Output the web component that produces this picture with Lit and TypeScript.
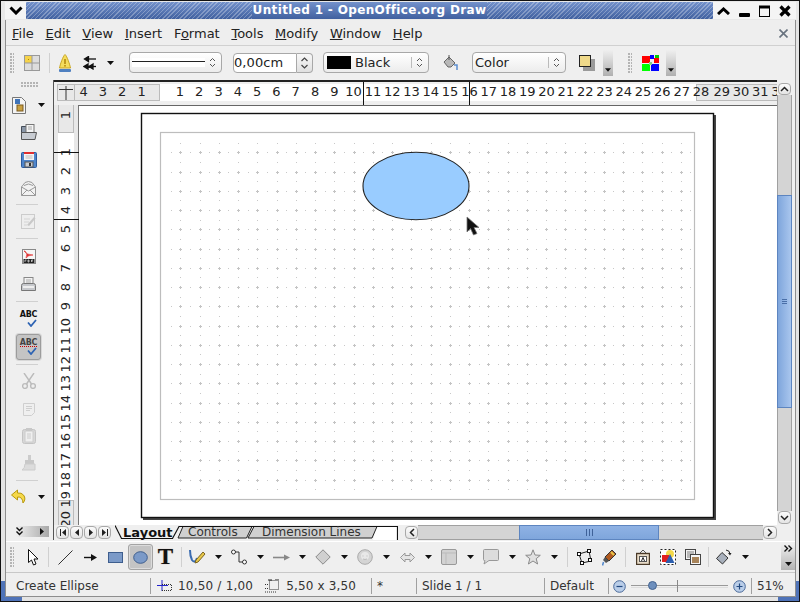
import { LitElement, html, css } from "lit";
import { customElement } from "lit/decorators.js";

const dd = html`<svg class="dd" width="7" height="4" viewBox="0 0 7 4"><path d="M0 0h7L3.500 4z" fill="#111"/></svg>`;
const chev = html`<svg width="9" height="14" viewBox="0 0 9 14" fill="none" stroke="#444" stroke-width="1.2"><path d="M1.500 5 4.500 2l3 3M1.500 9l3 3 3-3"/></svg>`;
const comboArrows = html`<span class="cb-arrows"><i></i><svg width="7" height="11" viewBox="0 0 7 11" fill="none" stroke="#555"><path d="M1 4 3.500 1.500 6 4M1 7l2.500 2.500L6 7"/></svg></span>`;
const dblRight = html`<svg width="9" height="7" viewBox="0 0 9 7" fill="none" stroke="#111" stroke-width="1.400"><path d="M.5.500l3 3-3 3M4.500.5l3 3-3 3"/></svg>`;
const dblDown = html`<svg width="7" height="9" viewBox="0 0 7 9" fill="none" stroke="#111" stroke-width="1.400"><path d="M.5.500l3 3 3-3M.5 4.500l3 3 3-3"/></svg>`;

const I = {
  table: html`<svg width="16" height="16" viewBox="0 0 16 16"><rect x=".5" y=".5" width="15" height="15" fill="#ddd" stroke="#999"/><rect x="1" y="1" width="7" height="7" fill="#f6d34a"/><path d="M8 0v16M0 8h16" stroke="#999"/><rect x="4" y="4" width="1" height="1" fill="#a80"/></svg>`,
  warn: html`<svg width="12" height="18" viewBox="0 0 12 18"><path d="M6 .5C4 2 1 11 .5 14h11C11 11 8 2 6 .5z" fill="#f4dc5c" stroke="#c9a520"/><rect x="5.200" y="5" width="1.600" height="5" fill="#b58a10"/><rect x="5.200" y="11" width="1.600" height="1.600" fill="#b58a10"/><rect x="0" y="15" width="12" height="3" rx="1" fill="#4f80c0"/></svg>`,
  arrows: html`<svg width="14" height="14" viewBox="0 0 14 14" fill="none" stroke="#111" stroke-width="1.300"><path d="M13 3H3"/><path d="M5.500 .5 1.500 3l4 2.500z" fill="#111"/><path d="M13 10.500H3"/><path d="M5 8 1 10.500 5 13z M10 8 6 10.500 10 13z" fill="#111"/></svg>`,
  fill: html`<svg width="17" height="17" viewBox="0 0 17 17"><path d="M2 8 7 3l6 6-4 4H6z" fill="#b8b8b8" stroke="#666"/><path d="M7 1v5" stroke="#555"/><path d="M12 11h3v5" fill="none" stroke="#5c8ed0" stroke-width="1.500"/></svg>`,
  shadow: html`<svg width="16" height="16" viewBox="0 0 16 16"><rect x="4" y="4" width="12" height="12" fill="#9a9a9a"/><rect x=".5" y=".5" width="11" height="11" fill="#efd98a" stroke="#222"/></svg>`,
  colors: html`<svg width="17" height="16" viewBox="0 0 17 16"><rect x="0" y="1" width="8" height="7" fill="#f00"/><rect x="8" y="0" width="4" height="4" fill="#00f"/><rect x="13" y="0" width="4" height="4" fill="#0c0"/><rect x="12" y="3" width="5" height="5" fill="#f00"/><rect x="0" y="9" width="8" height="7" fill="#0f0"/><rect x="9" y="9" width="8" height="7" fill="#00f"/><rect x="7" y="7" width="3" height="3" fill="#8c8"/></svg>`,
  newdoc: html`<svg width="14" height="17" viewBox="0 0 14 17"><path d="M.5.500h9l4 4v12H.5z" fill="#f4f4f4" stroke="#777"/><rect x="3" y="2" width="5" height="5" fill="#3f73b8"/><rect x="5" y="8" width="6" height="6" fill="#c9a040" stroke="#7a5a20"/></svg>`,
  open: html`<svg width="16" height="16" viewBox="0 0 16 16"><path d="M.5 2.500h5l1 2h6v9H.5z" fill="#8a97a8" stroke="#444c58"/><rect x="5" y=".5" width="8" height="8" fill="#f4f4f4" stroke="#777"/><path d="M7 3h4M7 5h4" stroke="#aaa"/><path d="M.5 8.500h15l-1.500 7H.5z" fill="#c8ccd2" stroke="#555"/></svg>`,
  save: html`<svg width="16" height="16" viewBox="0 0 16 16"><rect x=".5" y=".5" width="15" height="15" rx="1" fill="#4f86cc" stroke="#2c5a9c"/><rect x="3" y="0" width="10" height="2" fill="#e03030"/><rect x="3" y="2" width="10" height="6" fill="#f4f4f4"/><path d="M4.500 4h7M4.500 6h7" stroke="#bbb"/><rect x="4" y="10" width="8" height="5" fill="#c8ccd2" stroke="#555"/><rect x="8" y="11" width="2" height="3" fill="#333"/></svg>`,
  mail: html`<svg width="15" height="15" viewBox="0 0 15 15" fill="#f2f2f2" stroke="#999"><path d="M.5 6 4 1.500Q7.500-.5 11 1.500L14.500 6v8.500H.5z"/><path d="M.5 6 7.500 10l7-4M.5 14.500 6 9M14.500 14.500 9 9M3 4.500q4.500-3 9 0" fill="none"/></svg>`,
  edit: html`<svg width="15" height="15" viewBox="0 0 15 15"><rect x=".5" y=".5" width="13" height="14" fill="#eee" stroke="#ccc"/><path d="M3 5h6M3 8h5M3 11h3" stroke="#d4d4d4"/><path d="M6 11 13 3l1.500 1.500L8 12z" fill="#c8c8c8"/></svg>`,
  pdf: html`<svg width="14" height="15" viewBox="0 0 14 15"><rect x=".5" y=".5" width="13" height="14" fill="#f6f6f6" stroke="#888"/><path d="M2 2q3 4 9 4Q6 6 4 9 6 5 3 2z" fill="#e03030" stroke="#e03030" stroke-width=".6"/><path d="M1.500 10h11v4h-11z" fill="#222"/><path d="M3 11v2M3 11h1.500M6 11v2h1v-2zM9.500 11v2M9.500 11H11M9.500 12H11" stroke="#fff" stroke-width=".6" fill="none"/></svg>`,
  print: html`<svg width="15" height="15" viewBox="0 0 15 15"><rect x="3" y=".5" width="9" height="7" fill="#f2f2f2" stroke="#888"/><path d="M5 3h5M5 5h5" stroke="#aaa"/><path d="M.5 8.500q0-2 2-2h10q2 0 2 2v5h-14z" fill="#c6c8cc" stroke="#777"/><rect x="2" y="9" width="11" height="2" fill="#eee"/></svg>`,
  abc: html`<span class="abc"><b>ABC</b><svg width="10" height="8" viewBox="0 0 10 8" fill="none" stroke="#2d63b3" stroke-width="1.800"><path d="M1 3.500 4 7l5-6"/></svg></span>`,
  abc2: html`<span class="abc wavy"><b>ABC</b><svg width="10" height="8" viewBox="0 0 10 8" fill="none" stroke="#2d63b3" stroke-width="1.800"><path d="M1 3.500 4 7l5-6"/></svg></span>`,
  scissors: html`<svg width="14" height="16" viewBox="0 0 14 16" fill="none" stroke="#bbb" stroke-width="1.400"><path d="M2 0 9.500 11M12 0 4.500 11"/><circle cx="3" cy="13" r="2.400"/><circle cx="11" cy="13" r="2.400"/></svg>`,
  doc: html`<svg width="12" height="13" viewBox="0 0 12 13" fill="#efefef" stroke="#cfcfcf"><path d="M.5.500h11v9l-3 3h-8z"/><path d="M3 3.500h6M3 5.500h6M3 7.500h4"/></svg>`,
  clip: html`<svg width="14" height="16" viewBox="0 0 14 16"><rect x=".5" y="1.500" width="13" height="14" rx="2" fill="#d8d8d8" stroke="#c4c4c4"/><rect x="3" y="3" width="8" height="11" fill="#efefef" stroke="#ccc"/><rect x="4" y="0" width="6" height="3" fill="#c8c8c8"/><path d="M5 6h4M5 8h4M5 10h4" stroke="#ccc"/></svg>`,
  brush: html`<svg width="14" height="16" viewBox="0 0 14 16"><rect x="6" y="0" width="3" height="5" fill="#ccc"/><rect x="3" y="5" width="9" height="4" fill="#c8c8c8"/><path d="M3 9h10v6H0q3-2 3-6z" fill="#dcdcdc" stroke="#ccc"/></svg>`,
  undo: html`<svg width="16" height="16" viewBox="0 0 16 16"><path d="M6.500 1 .5 6l6 5V8q5-.5 5.500 6 3.500-4 .5-8-2-2.500-6-2z" fill="#f6d94a" stroke="#b89a10"/></svg>`,
  cursor: html`<svg width="11" height="17" viewBox="0 0 11 17"><path d="M.5.500v13l3-2.500 2 5 2.500-1-2-5h4z" fill="#fff" stroke="#111"/></svg>`,
  line: html`<svg width="15" height="15" viewBox="0 0 15 15"><path d="M.5 14.500 14.500.5" stroke="#333"/></svg>`,
  arrow: html`<svg width="13" height="9" viewBox="0 0 13 9"><path d="M0 4.500h8" stroke="#111" stroke-width="1.400"/><path d="M7 1l6 3.500L7 8z" fill="#111"/></svg>`,
  rect: html`<svg width="15" height="11" viewBox="0 0 15 11"><rect x=".5" y=".5" width="14" height="10" fill="#7b9ac8" stroke="#3e5e8e"/></svg>`,
  ell: html`<svg width="15" height="13" viewBox="0 0 15 13"><ellipse cx="7.500" cy="6.500" rx="6.800" ry="5.800" fill="#7b9ac8" stroke="#3e5e8e"/></svg>`,
  curve: html`<svg width="17" height="16" viewBox="0 0 17 16"><path d="M1 1q0 6 2 10 3 4 5-2" fill="none" stroke="#3a6bb0" stroke-width="2"/><path d="M7 11 14 3l2 2-7 8-3 1z" fill="#e8c84a" stroke="#7a6420"/></svg>`,
  conn: html`<svg width="16" height="16" viewBox="0 0 16 16" fill="#fff" stroke="#333"><path d="M4 3h4v10h4" fill="none"/><circle cx="2.500" cy="3" r="2"/><circle cx="13.500" cy="13" r="2"/></svg>`,
  garrow: html`<svg width="17" height="7" viewBox="0 0 17 7"><path d="M0 3.500h12" stroke="#888" stroke-width="1.600"/><path d="M11 .5l6 3-6 3z" fill="#888"/></svg>`,
  diamond: html`<svg width="16" height="16" viewBox="0 0 16 16"><path d="M8 .8 15.200 8 8 15.200.8 8z" fill="#d0d0d0" stroke="#8a8a8a"/></svg>`,
  circ: html`<svg width="16" height="16" viewBox="0 0 16 16"><circle cx="8" cy="8" r="7.300" fill="#d4d4d4" stroke="#aaa"/><circle cx="8" cy="7" r="4" fill="#e8e8e8"/><path d="M5.500 7h1M9.500 7h1M6 10q2 1 4 0" stroke="#bbb" fill="none"/></svg>`,
  dbl: html`<svg width="15" height="11" viewBox="0 0 15 11"><path d="M.5 5.500 5 1v2.500h5V1l4.500 4.500L10 10V7.500H5V10z" fill="#e4e4e4" stroke="#999"/></svg>`,
  sq: html`<svg width="16" height="16" viewBox="0 0 16 16"><rect x=".5" y=".5" width="15" height="15" rx="1.500" fill="#d2d2d2" stroke="#999"/><path d="M1 4h14M5 4v11" stroke="#bbb"/></svg>`,
  callout: html`<svg width="16" height="16" viewBox="0 0 16 16"><path d="M1.500.5h13a1 1 0 0 1 1 1v9a1 1 0 0 1-1 1H6L1 15l1-3.500h-.5a1 1 0 0 1-1-1v-9a1 1 0 0 1 1-1z" fill="#dcdcdc" stroke="#999"/></svg>`,
  star: html`<svg width="16" height="16" viewBox="0 0 16 16"><path d="M8 .8 10 6l5.300.3-4.100 3.400 1.400 5.300L8 12l-4.600 3 1.400-5.300L.7 6.300 6 6z" fill="#e0e0e0" stroke="#8a8a8a"/></svg>`,
  points: html`<svg width="15" height="16" viewBox="0 0 15 16"><path d="M2 5 12 2l2 10-9 2z" fill="none" stroke="#222"/><g fill="#fff" stroke="#111"><rect x=".5" y="3.500" width="3" height="3"/><rect x="10.500" y=".5" width="3" height="3"/><rect x="11.500" y="9.500" width="3" height="3"/><rect x="3.500" y="12.500" width="3" height="3"/></g></svg>`,
  glue: html`<svg width="15" height="17" viewBox="0 0 15 17"><path d="M10 1l4 4-7 7-4-4z" fill="#b05a20" stroke="#333"/><path d="M9 3l3 3" stroke="#e8c84a" stroke-width="2"/><path d="M3 8l4 4-3 2-3-3z" fill="#555"/><path d="M1.500 13 .5 16.500" stroke="#4f86cc" stroke-width="1.500"/></svg>`,
  frame: html`<svg width="14" height="16" viewBox="0 0 14 16"><path d="M4 4 7 1l3 3" fill="none" stroke="#555"/><rect x=".5" y="4.500" width="13" height="11" fill="#e8dcc8" stroke="#4a3a28" stroke-width="1.400"/><rect x="3.500" y="7.500" width="7" height="5" fill="#fff" stroke="#555"/><path d="M5.500 12 7 8.500 8.500 12" fill="none" stroke="#222"/></svg>`,
  align: html`<svg width="16" height="16" viewBox="0 0 16 16"><rect x=".5" y=".5" width="15" height="15" fill="#fff" stroke="#222" stroke-dasharray="2 2"/><circle cx="10" cy="5" r="4" fill="#f4d94a"/><rect x="2" y="6" width="7" height="7" fill="#e02020"/><path d="M10 5l4.500 9h-9z" fill="#2d5fae"/></svg>`,
  arrange: html`<svg width="16" height="16" viewBox="0 0 16 16"><rect x=".5" y=".5" width="10" height="10" fill="#f2f2f2" stroke="#444"/><rect x="2" y="2" width="7" height="7" fill="#b8b8b8"/><rect x="5.500" y="5.500" width="10" height="10" fill="#f6f6f6" stroke="#444"/><rect x="7" y="8" width="7" height="6" fill="#a8845a"/></svg>`,
  rotate: html`<svg width="16" height="16" viewBox="0 0 16 16"><path d="M6 3.500 12 9l-5.500 6L.5 9.500z" fill="#a8b0bc" stroke="#333"/><path d="M10 1q4 .5 4 4" fill="none" stroke="#222"/><path d="M12 4l2 2.500L15.500 4z" fill="#222"/></svg>`,
  pos: html`<svg width="15" height="13" viewBox="0 0 15 13"><path d="M5 0v11M0 5.500h11" stroke="#22c" /><path d="M5 4.500h9.500v6H5" fill="none" stroke="#333" stroke-dasharray="1 1"/></svg>`,
  size: html`<svg width="14" height="14" viewBox="0 0 14 14"><rect x="4.500" y="1.500" width="9" height="9" fill="none" stroke="#333" stroke-dasharray="1 1"/><path d="M0 5.500h3M0 9.500h3M0 13h12" stroke="#333" stroke-dasharray="1 1"/><path d="M3 1h4M10 0h4" stroke="#222"/></svg>`,
  minus: html`<svg width="13" height="13" viewBox="0 0 13 13"><circle cx="6.500" cy="6.500" r="5.800" fill="#b9cde8" stroke="#4a6a9a"/><path d="M3.500 6.500h6" stroke="#234a80" stroke-width="1.200"/></svg>`,
  plus: html`<svg width="13" height="13" viewBox="0 0 13 13"><circle cx="6.500" cy="6.500" r="5.800" fill="#b9cde8" stroke="#4a6a9a"/><path d="M3.500 6.500h6M6.500 3.500v6" stroke="#234a80" stroke-width="1.200"/></svg>`,
};

function gridPath(): { cross: string; dots: string } {
  const P = 19.25;
  let cross = "";
  let dots = "";
  const X = (i: number) => Math.round(161 + P * i) + 0.5;
  const Y = (j: number) => Math.round(133 + P * j) + 0.5;
  for (let j = 0.5; j <= 18.5; j += 0.5) {
    for (let i = 0.5; i <= 27.5; i += 0.5) {
      const rowInt = Number.isInteger(j);
      const colInt = Number.isInteger(i);
      if (rowInt && colInt) cross += `M${X(i) - 2} ${Y(j)}h3M${X(i) - 0.5} ${Y(j) - 1.5}v3`;
      else if (rowInt !== colInt) dots += `M${X(i) - 0.5} ${Y(j)}h1`;
    }
  }
  return { cross, dots };
}
const grid = gridPath();

const tool = (icon: unknown) => html`<span class="tool"><span class="ti">${icon}</span>${dd}</span>`;
const slot = (icon: unknown, cls = "") => html`<span class="slot ${cls}">${icon}</span>`;
const sideRow = (icon: unknown, cls = "", drop = false) =>
  html`<div class="srow ${cls}">${slot(icon)}${drop ? dd : ""}</div>`;
const menu: [string, string, string][] = [
  ["", "F", "ile"], ["", "E", "dit"], ["", "V", "iew"], ["", "I", "nsert"],
  ["F", "o", "rmat"], ["", "T", "ools"], ["", "M", "odify"], ["", "W", "indow"], ["", "H", "elp"],
];
const range = (a: number, b: number) => Array.from({ length: b - a + 1 }, (_, i) => a + i);

@customElement("app-root")
export class AppRoot extends LitElement {
  static styles = css`
    :host { display: block; width: 800px; height: 602px; overflow: hidden; font: 13px "DejaVu Sans", sans-serif; color: #222; }
    svg { display: block; flex: none; }
    .win { position: relative; box-sizing: border-box; width: 800px; height: 602px; background: #e4e4e4; border: 1px solid #111; padding: 0 3px 4px 4px; display: flex; flex-direction: column; }
    .corner { position: absolute; bottom: 0; width: 21px; height: 20px; background: #4f73b8; }
    .corner.l { left: 0; } .corner.r { right: 0; }
    .title { height: 18px; margin: 0 -3px 0 -4px; padding: 1px 3px 0 4px; display: flex; background: #e8e8e8; flex: none; }
    .tb { display: flex; align-items: center; justify-content: center; background: #f4f4f4; height: 17px; flex: none; }
    .tb.left { width: 21px; }
    .tb.right { width: 83px; }
    .tb.right span { width: 20.500px; display: flex; justify-content: center; }
    .tbar { flex: 1; display: flex; justify-content: center; height: 17px; color: #fff; font-weight: bold; font-size: 12px; letter-spacing: .35px; line-height: 17px; background: linear-gradient(#7391cb, #40609f); }
    .hatch { flex: 1; background: repeating-linear-gradient(135deg, rgba(255,255,255,.28) 0 1px, transparent 1px 3px); }
    .tbar .t { padding: 0 1px; white-space: nowrap; }
    .body { position: relative; z-index: 1; flex: 1; display: flex; flex-direction: column; background: #efefef; border: 1px solid #8e8e8e; border-width: 0 1px 1px 1px; min-height: 0; }
    .menu { height: 26px; display: flex; align-items: center; gap: 11.700px; padding-left: 6px; padding-right: 7px; border-bottom: 1px solid #d0d0d0; box-sizing: border-box; flex: none; background: #eee; padding-top: 2px; }
    .menu .x { margin-left: auto; }
    .tbtop { height: 34px; display: flex; align-items: center; flex: none; box-sizing: border-box; padding-bottom: 1px; }
    .grip { width: 4px; height: 20px; flex: none; margin-left: 4px; background: radial-gradient(circle at 1px 1px, #b4b4b4 .8px, transparent 1px) 0 0 / 3px 3px; }
    .vsep { width: 1px; height: 20px; background: #d0d0d0; flex: none; margin: 0 4px 0 3px; }
    .dd { flex: none; }
    .combo { height: 21px; box-sizing: border-box; border: 1px solid #a8a8a8; border-radius: 4px; background: linear-gradient(#fff, #ececec); display: flex; align-items: center; flex: none; position: relative; }
    .cb-arrows { margin-left: auto; display: flex; align-items: center; gap: 4px; padding-right: 5px; }
    .cb-arrows i { width: 1px; height: 11px; background: #bbb; display: block; }
    .c-table { margin-left: 10px; }
    .c-sep1 { margin: 0 9px 0 9px; width: 1px; height: 20px; background: #d0d0d0; flex: none; }
    .c-arrows { margin-left: 12px; }
    .c-dd1 { margin-left: 10px; }
    .c-line { margin-left: 15px; width: 93px; padding-left: 2px; }
    .c-line i { display: block; width: 65px; height: 9px; background: linear-gradient(#fff 0 3px, #222 3px 4px, #fff 4px); }
    .c-input { margin-left: 11px; display: flex; height: 20px; flex: none; }
    .c-input .in { width: 64px; box-sizing: border-box; border: 1px solid #a8a8a8; border-radius: 4px 0 0 4px; background: #fff; line-height: 18px; padding-left: 0; letter-spacing: .1px; }
    .c-input .sp { width: 16px; box-sizing: border-box; border: 1px solid #a8a8a8; border-left: 0; border-radius: 0 4px 4px 0; background: linear-gradient(#f8f8f8, #e0e0e0); display: flex; align-items: center; justify-content: center; }
    .c-color { margin-left: 10px; width: 106px; padding-left: 3px; gap: 4px; }
    .swatch { width: 24px; height: 13px; background: #000; flex: none; }
    .c-fill { margin-left: 13px; }
    .c-area { margin-left: 13px; width: 94px; padding-left: 2px; }
    .c-shadow { margin-left: 13px; }
    .ddbox { width: 10px; height: 26px; flex: none; background: linear-gradient(#efefef, #b0b0b0); display: flex; align-items: flex-end; justify-content: center; padding-bottom: 4px; box-sizing: border-box; }
    .ddbox svg { width: 6px; height: 4px; }
    .c-b1 { margin-left: 8px; }
    .c-g2 { margin-left: 15px; }
    .c-colors { margin-left: 10px; }
    .c-b2 { margin-left: 7px; }
    .work { flex: 1; display: flex; min-height: 0; }
    .side { width: 47px; box-sizing: border-box; flex: none; display: flex; flex-direction: column; }
    .shgrip { height: 12px; flex: none; display: flex; justify-content: center; padding-top: 2px; box-sizing: border-box; }
    .shgrip i { width: 17px; height: 5px; display: block; background: radial-gradient(circle at 1px 1px, #b4b4b4 .8px, transparent 1px) 0 0 / 3px 3px; }
    .srow { height: 28px; flex: none; display: flex; align-items: center; padding-left: 10px; box-sizing: border-box; }
    .srow.h26 { height: 26px; }
    .srow .slot { width: 25px; flex: none; }
    .srow.left { padding-left: 5px; }
    .srow.left .slot { width: 16px; }
    .srow.left .dd { margin-left: 11px; }
    .srow.pressed .slot { background: #c4c4c4; border: 1px solid #9c9c9c; border-radius: 3px; box-shadow: 0 0 0 1px #d8d8d8; height: 26px; box-sizing: border-box; }
    .hsep { flex: none; display: flex; align-items: center; justify-content: center; padding-right: 6px; }
    .hsep i { display: block; width: 22px; height: 1px; background: #d0d0d0; }
    .h5 { height: 5px; } .h6 { height: 6px; } .h7 { height: 7px; }
    .sfoot { margin-top: auto; height: 11px; margin-bottom: 3px; display: flex; align-items: center; margin-left: 10px; width: 33px; background: linear-gradient(90deg, #efefef, #a8a8a8); flex: none; justify-content: space-between; padding: 0 5px 0 0; box-sizing: border-box; }
    .main { flex: 1; min-width: 0; display: flex; flex-direction: column; border-left: 1px solid #555; }
    .top { flex: 1; min-height: 0; display: flex; }
    .edit { width: 723px; display: flex; flex-direction: column; flex: none; border-top: 2px solid #222; box-sizing: border-box; }
    .hrow { height: 23px; flex: none; display: flex; padding: 2px 0 0 3px; box-sizing: border-box; position: relative; }
    .rcorner { width: 18px; height: 17px; flex: none; background: #e8e8e8; border: 1px solid #bbb; box-sizing: border-box; display: flex; align-items: center; justify-content: center; }
    .hruler { flex: 1; min-width: 0; display: flex; height: 17px; overflow: hidden; background: #fff; line-height: 15px; font-size: 13px; }
    .seg { display: flex; flex: none; box-sizing: border-box; height: 17px; }
    .seg.gray { background: #e8e8e8; border: 1px solid #bbb; border-width: 1px 1px 1px 0; line-height: 14px; }
    .seg.g1 { width: 85px; }
    .seg.g1 .cell:first-child { margin-left: -1px; }
    .seg.white { width: 536px; padding-left: 10.300px; position: relative; z-index: 1; }
    .seg.g2 { width: 90px; padding-left: 15px; border-width: 1px 0 1px 1px; }
    .cell { width: 19.300px; flex: none; text-align: center; white-space: nowrap; display: flex; justify-content: center; }
    .tick { position: absolute; background: #111; }
    .tick.h { top: 0; bottom: 0; width: 1px; z-index: 2; }
    .tick.h.a { left: 309px; } .tick.h.b { left: 415px; }
    .tick.v { left: 0; width: 25px; height: 1px; z-index: 2; }
    .tick.v.a { top: 47px; } .tick.v.b { top: 114px; }
    .lower { flex: 1; min-height: 0; display: flex; }
    .vwrap { width: 24px; flex: none; display: flex; position: relative; padding-left: 4px; box-sizing: border-box; background: #e8e8e8; }
    .vruler { width: 16px; display: flex; flex-direction: column; background: #fff; height: 100%; font-size: 13px; overflow: hidden; }
    .vseg { flex: none; box-sizing: border-box; width: 16px; display: flex; flex-direction: column; }
    .vseg.gray { background: #e8e8e8; border: 1px solid #bbb; }
    .vseg.v1 { height: 28px; border-top: 0; }
    .vseg.v2 { height: 367px; position: relative; z-index: 1; padding-top: 9.500px; }
    .vseg.v3 { flex: 1; border-bottom: 0; padding-top: 9px; }
    .vcell { height: 19.300px; flex: none; display: flex; align-items: center; justify-content: center; }
    .vcell span { writing-mode: vertical-rl; transform: rotate(180deg); line-height: 14px; white-space: nowrap; }
    .canvas { flex: 1; min-width: 0; background: #fff; border-left: 1px solid #777; border-top: 1px solid #666; overflow: hidden; }
    .vscroll { width: 15px; flex: none; display: flex; flex-direction: column; padding: 3px 0 1px; box-sizing: border-box; }
    .sb { box-sizing: border-box; background: linear-gradient(#fbfbfb, #e4e4e4); border: 1px solid #a8a8a8; border-radius: 4px; display: flex; align-items: center; justify-content: center; flex: none; }
    .vscroll .sb { width: 13px; height: 13px; margin-left: 1px; }
    .vscroll .sb.up { height: 12px; }
    .vtrack { flex: 1; background: #d4d4d4; border: 1px solid #a0a0a0; border-width: 0 1px; display: flex; flex-direction: column; box-sizing: border-box; }
    .vtrack .pre { height: 100px; flex: none; }
    .thumb { background: linear-gradient(90deg, #7fa6dc, #a9c6ee); border: 1px solid #5d85c0; box-sizing: border-box; display: flex; align-items: center; justify-content: center; flex: none; }
    .vtrack .thumb { height: 213px; margin: 0 -1px; }
    .vtrack .thumb i { width: 5px; height: 5px; display: block; background: repeating-linear-gradient(#4a6fa8 0 1px, transparent 1px 2px); }
    .bottom { height: 15px; flex: none; display: flex; box-sizing: border-box; }
    .nav { display: flex; gap: 1px; padding: 1px 0 0 2px; flex: none; width: 61px; box-sizing: border-box; }
    .nav .sb { width: 13px; height: 13px; }
    .tabs { width: 283px; height: 15px; flex: none; position: relative; display: flex; font-size: 12px; line-height: 13px; padding-top: 1px; box-sizing: border-box; }
    .tabs svg { position: absolute; left: 0; top: 0; }
    .tab { position: relative; white-space: nowrap; color: #333; }
    .tab.t1 { margin-left: 8px; width: 65px; color: #111; font-weight: bold; font-size: 13px; }
    .tab.t2 { width: 74px; }
    .hb { margin-left: 7px; }
    .hscroll { flex: 1; display: flex; height: 15px; }
    .hscroll .sb { width: 14px; height: 13px; margin-top: 1px; }
    .hscroll .sb.lf { width: 13px; }
    .htrack { width: 345px; flex: none; background: #d4d4d4; border-top: 1px solid #a0a0a0; border-bottom: 1px solid #a0a0a0; box-sizing: border-box; display: flex; }
    .htrack .pre { width: 101px; flex: none; }
    .htrack .thumb { width: 140px; margin: -1px 0; background: linear-gradient(#8fb2e4, #7fa6dc); }
    .htrack .thumb i { width: 7px; height: 7px; display: block; background: repeating-linear-gradient(90deg, #3f6299 0 1px, transparent 1px 3px); }
    .draw { height: 32px; flex: none; display: flex; align-items: center; border-top: 1px solid #fff; border-bottom: 1px solid #c8c8c8; box-sizing: border-box; margin-top: 1px; }
    .slot { width: 25px; display: flex; justify-content: center; align-items: center; flex: none; }
    .s24 { width: 24px; margin-left: 7px; }
    .pressed-b { height: 26px; box-sizing: border-box; background: #c4c4c4; border: 1px solid #a4a4a4; border-radius: 3px; box-shadow: 0 0 0 1px #dcdcdc inset; }
    .tool { width: 42px; flex: none; display: flex; align-items: center; }
    .ti { width: 16px; margin-left: 3px; display: flex; justify-content: center; flex: none; }
    .tool .dd { margin-left: 10px; }
    .t-text { font-family: "Liberation Serif", serif; font-weight: bold; font-size: 23px; color: #111; line-height: 24px; text-shadow: 0 0 1px #a87; }
    .over { margin-left: auto; width: 14px; height: 26px; background: linear-gradient(#efefef, #b4b4b4); display: flex; flex-direction: column; align-items: center; justify-content: space-between; padding: 1px 0 4px; box-sizing: border-box; flex: none; }
    .status { flex: none; height: 23px; display: flex; align-items: center; font-size: 12px; padding-top: 3px; box-sizing: border-box; color: #333; }
    .st { height: 16px; display: flex; align-items: center; box-sizing: border-box; flex: none; border-left: 1px solid #a0a0a0; padding-left: 5px; white-space: nowrap; }
    .st.s1 { width: 144px; border-left: 0; padding-left: 10px; }
    .st.s2 { width: 221px; padding-left: 6px; }
    .st.s3 { width: 45px; }
    .st.s4 { width: 128px; }
    .st.s5 { width: 64px; }
    .st.s6 { width: 143px; padding-left: 4px; }
    .pos-t { margin-left: 6px; letter-spacing: .2px; }
    .sz { margin-left: 12px; }
    .sz-t { margin-left: 7px; letter-spacing: .15px; }
    .slider { width: 97px; height: 13px; margin: 0 5px; position: relative; flex: none; display: flex; align-items: center; }
    .slider .rail { height: 3px; flex: 1; border: 1px solid #999; border-width: 1px 0; border-bottom-color: #ddd; box-sizing: border-box; }
    .knob { position: absolute; left: 17px; top: 1px; width: 7px; height: 7px; border-radius: 50%; background: #6d8fbd; border: 1px solid #44638f; }
    .mid { position: absolute; left: 46px; top: 0; width: 1px; height: 12px; background: #888; }
    .abc { display: flex; flex-direction: column; align-items: center; width: 16px; height: 17px; font-size: 8px; line-height: 8px; letter-spacing: -.2px; }
    .abc b { color: #111; }
    .abc svg { margin-left: 7px; }
    .abc.wavy b { color: #444; border-bottom: 1px dotted #c00; line-height: 7px; }
  `;

  render() {
    return html`
      <div class="win">
        <div class="corner l"></div><div class="corner r"></div>
        <div class="title">
          <div class="tb left"><svg width="14" height="9" viewBox="0 0 14 9" fill="none" stroke="#000" stroke-width="3"><path d="M1.500 1.500 7 7l5.500-5.500"/></svg></div>
          <div class="tbar"><div class="hatch"></div><div class="t">Untitled 1 - OpenOffice.org Draw</div><div class="hatch"></div></div>
          <div class="tb right">
            <span><svg width="13" height="8" viewBox="0 0 13 8" fill="none" stroke="#000" stroke-width="3"><path d="M1 7 6.500 2 12 7"/></svg></span>
            <span><svg width="11" height="12" viewBox="0 0 11 12"><rect y="8" width="11" height="4" rx="1" fill="#000"/></svg></span>
            <span><svg width="11" height="12" viewBox="0 0 11 12" fill="none" stroke="#000"><rect x=".5" y="1.500" width="10" height="10"/><path d="M0 2h11" stroke-width="3"/></svg></span>
            <span><svg width="12" height="12" viewBox="0 0 12 12" stroke="#000" stroke-width="3.200"><path d="M1.500 1.500l9 9M10.500 1.500l-9 9"/></svg></span>
          </div>
        </div>
        <div class="body">
          <div class="menu">
            ${menu.map(([a, u, b]) => html`<span>${a}<u>${u}</u>${b}</span>`)}
            <svg class="x" width="9" height="9" viewBox="0 0 9 9" stroke="#68737f" stroke-width="1.600"><path d="M.5.500l8 8M8.500.5l-8 8"/></svg>
          </div>
          <div class="tbtop">
            <span class="grip"></span>
            <span class="c-table">${I.table}</span>
            <span class="c-sep1"></span>
            ${I.warn}
            <span class="c-arrows">${I.arrows}</span>
            <span class="c-dd1">${dd}</span>
            <div class="combo c-line"><i></i>${comboArrows}</div>
            <div class="c-input"><div class="in">0,00cm</div><div class="sp">${chev}</div></div>
            <div class="combo c-color"><span class="swatch"></span><span>Black</span>${comboArrows}</div>
            <span class="c-fill">${I.fill}</span>
            <div class="combo c-area"><span>Color</span>${comboArrows}</div>
            <span class="c-shadow">${I.shadow}</span>
            <span class="ddbox c-b1">${dd}</span>
            <span class="grip c-g2"></span>
            <span class="c-colors">${I.colors}</span>
            <span class="ddbox c-b2">${dd}</span>
          </div>
          <div class="work">
            <div class="side">
              <div class="shgrip"><i></i></div>
              ${sideRow(I.newdoc, "h26 left", true)}
              ${sideRow(I.open)}
              ${sideRow(I.save)}
              ${sideRow(I.mail)}
              <div class="hsep h5"><i></i></div>
              ${sideRow(I.edit)}
              <div class="hsep h7"><i></i></div>
              ${sideRow(I.pdf)}
              ${sideRow(I.print)}
              <div class="hsep h7"><i></i></div>
              ${sideRow(I.abc)}
              ${sideRow(I.abc2, "pressed")}
              <div class="hsep h6"><i></i></div>
              ${sideRow(I.scissors)}
              ${sideRow(I.doc)}
              ${sideRow(I.clip, "h26")}
              ${sideRow(I.brush)}
              <div class="hsep h6"><i></i></div>
              ${sideRow(I.undo, "left", true)}
              <div class="sfoot">${dblDown}<svg width="4" height="7" viewBox="0 0 4 7"><path d="M0 0l4 3.500L0 7z" fill="#111"/></svg></div>
            </div>
            <div class="main">
              <div class="top">
                <div class="edit">
                  <div class="hrow">
                    <div class="rcorner"><svg width="14" height="14" viewBox="0 0 14 14" stroke="#333"><path d="M7 0v14M0 3.500h14"/></svg></div>
                    <div class="hruler">
                      <div class="seg gray g1">${[4, 3, 2, 1].map((n) => html`<span class="cell">${n}</span>`)}</div>
                      <div class="seg white">${range(1, 28).map((n) => html`<span class="cell">${n}</span>`)}</div>
                      <div class="seg gray g2">${range(29, 32).map((n) => html`<span class="cell">${n}</span>`)}</div>
                    </div>
                    <i class="tick h a"></i><i class="tick h b"></i>
                  </div>
                  <div class="lower">
                    <div class="vwrap">
                      <div class="vruler">
                        <div class="vseg gray v1"><span class="vcell"><span>1</span></span></div>
                        <div class="vseg v2">${range(1, 18).map((n) => html`<span class="vcell"><span>${n}</span></span>`)}<span class="vcell"><span>19</span></span></div>
                        <div class="vseg gray v3"><span class="vcell"><span>20</span></span></div>
                      </div>
                      <i class="tick v a"></i><i class="tick v b"></i>
                    </div>
                    <div class="canvas">
                      <svg width="697" height="420" viewBox="79 106 697 420">
                        <rect x="714" y="115" width="2" height="405" fill="#444"/>
                        <rect x="143" y="518" width="573" height="2" fill="#444"/>
                        <rect x="141.500" y="113.500" width="572" height="404" fill="#fff" stroke="#111" stroke-width="1.400"/>
                        <rect x="160.500" y="132.500" width="534" height="367" fill="none" stroke="#bdbdbd" stroke-width="1.200"/>
                        <path d="${grid.dots}" stroke="#c8c8c8" shape-rendering="crispEdges"/>
                        <path d="${grid.cross}" stroke="#c4c4c4" shape-rendering="crispEdges"/>
                        <ellipse cx="416" cy="186" rx="53" ry="33.800" fill="#99ccff" stroke="#222" stroke-width="1.100"/>
                        <path d="M467 217v15l3.500-3.500 3 6.500 3.500-1.500-3-6h5z" fill="#111" stroke="#777" stroke-width=".8"/>
                      </svg>
                    </div>
                  </div>
                </div>
                <div class="vscroll">
                  <div class="sb up"><svg width="9" height="6" viewBox="0 0 9 6" fill="none" stroke="#222" stroke-width="1.500"><path d="M1 5l3.500-3.500L8 5"/></svg></div>
                  <div class="vtrack"><div class="pre"></div><div class="thumb"><i></i></div></div>
                  <div class="sb"><svg width="9" height="6" viewBox="0 0 9 6" fill="none" stroke="#222" stroke-width="1.500"><path d="M1 1l3.500 3.500L8 1"/></svg></div>
                </div>
              </div>
              <div class="bottom">
                <div class="nav">
                  <div class="sb"><svg width="6" height="7" viewBox="0 0 6 7" fill="#222"><path d="M0 0h1v7H0zM6 0v7L2 3.500z"/></svg></div>
                  <div class="sb"><svg width="4" height="7" viewBox="0 0 4 7" fill="#222"><path d="M4 0v7L0 3.500z"/></svg></div>
                  <div class="sb"><svg width="4" height="7" viewBox="0 0 4 7" fill="#222"><path d="M0 0v7l4-3.500z"/></svg></div>
                  <div class="sb"><svg width="6" height="7" viewBox="0 0 6 7" fill="#222"><path d="M5 0h1v7H5zM0 0v7l4-3.500z"/></svg></div>
                </div>
                <div class="tabs">
                  <svg width="283" height="15" viewBox="115 525 283 15">
                    <path d="M377 526h20v14h-24z" fill="#fff"/>
                    <path d="M183 526.500h69L246.500 538H178z" fill="#d0d0d0" stroke="#222"/>
                    <path d="M254 526.500h123L372 538H248z" fill="#d0d0d0" stroke="#222"/>
                    <path d="M115 525.500 121.500 538.500H172.500L179 526.500H397.500V540" fill="none" stroke="#111" stroke-width="1.200"/>
                  </svg>
                  <span class="tab t1">Layout</span>
                  <span class="tab t2">Controls</span>
                  <span class="tab t3">Dimension Lines</span>
                </div>
                <div class="hscroll hb">
                  <div class="sb lf"><svg width="6" height="9" viewBox="0 0 6 9" fill="none" stroke="#222" stroke-width="1.500"><path d="M5 1 1.500 4.500 5 8"/></svg></div>
                  <div class="htrack"><div class="pre"></div><div class="thumb"><i></i></div></div>
                  <div class="sb"><svg width="6" height="9" viewBox="0 0 6 9" fill="none" stroke="#222" stroke-width="1.500"><path d="M1 1l3.500 3.500L1 8"/></svg></div>
                </div>
              </div>
            </div>
          </div>
          <div class="draw">
            <span class="grip"></span>
            ${slot(I.cursor, "s24")}
            <span class="vsep"></span>
            ${slot(I.line)}${slot(I.arrow)}${slot(I.rect)}${slot(I.ell, "pressed-b")}
            <span class="slot t-text">T</span>
            <span class="vsep"></span>
            ${tool(I.curve)}${tool(I.conn)}${tool(I.garrow)}${tool(I.diamond)}${tool(I.circ)}${tool(I.dbl)}${tool(I.sq)}${tool(I.callout)}${tool(I.star)}
            <span class="vsep"></span>
            ${slot(I.points)}${slot(I.glue)}
            <span class="vsep"></span>
            ${slot(I.frame)}${slot(I.align)}${slot(I.arrange)}
            <span class="vsep"></span>
            ${tool(I.rotate)}
            <span class="over">${dblRight}${dd}</span>
          </div>
          <div class="status">
            <div class="st s1">Create Ellipse</div>
            <div class="st s2">${I.pos}<span class="pos-t">10,50 / 1,00</span><span class="sz">${I.size}</span><span class="sz-t">5,50 x 3,50</span></div>
            <div class="st s3">*</div>
            <div class="st s4">Slide 1 / 1</div>
            <div class="st s5">Default</div>
            <div class="st s6">${I.minus}<div class="slider"><div class="rail"></div><i class="knob"></i><i class="mid"></i></div>${I.plus}</div>
            <div class="st s7">51%</div>
          </div>
        </div>
      </div>
    `;
  }
}
